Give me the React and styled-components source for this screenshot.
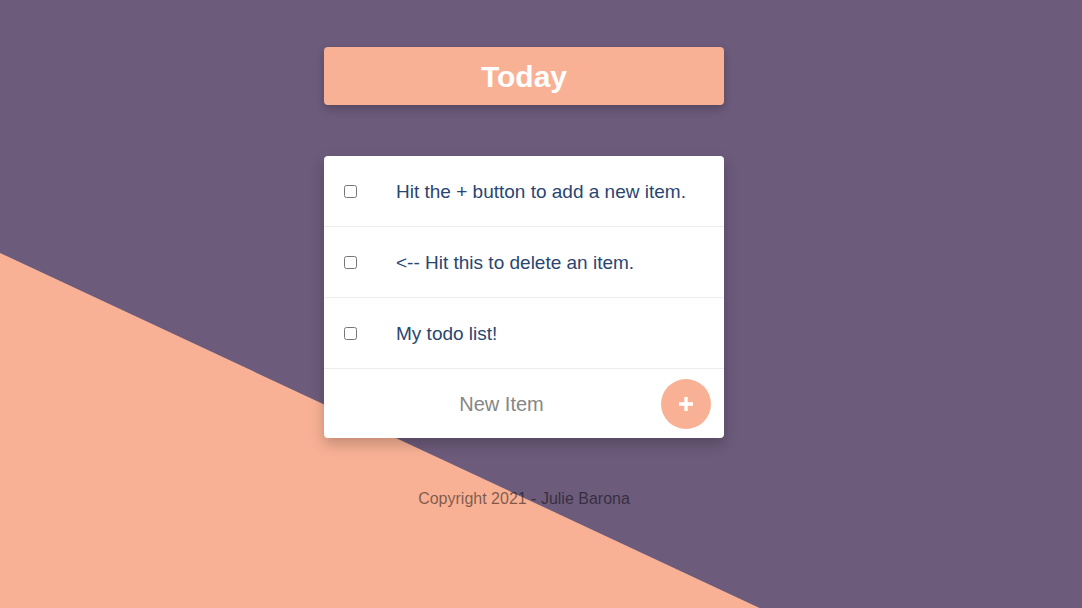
import styled, { createGlobalStyle } from "styled-components";
import { useState } from "react";

const COLORS = {
  purple: "#6c5b7b",
  peach: "#f8b195",
  navy: "#2a4670",
  line: "#ececec",
};

const GlobalStyle = createGlobalStyle`
  html, body {
    margin: 0;
    padding: 0;
  }

  body {
    font-family: "Helvetica Neue", "Liberation Sans", Arial, sans-serif;
    background: ${COLORS.purple};
  }
`;

const App = () => {
  const [items] = useState([
    { id: 1, text: "Hit the + button to add a new item." },
    { id: 2, text: "<-- Hit this to delete an item." },
    { id: 3, text: "My todo list!" },
  ]);

  return (
    <Page>
      <GlobalStyle />
      <Content>
        <Heading>
          <Title>Today</Title>
        </Heading>
        <Card>
          {items.map((item) => (
            <Row key={item.id}>
              <Check type="checkbox" />
              <ItemText>{item.text}</ItemText>
            </Row>
          ))}
          <NewRow>
            <NewInput placeholder="New Item" spellCheck={false} />
            <AddButton aria-label="add">
              <svg width="18" height="18" viewBox="0 0 18 18">
                <path d="M9 2v14M2 9h14" stroke="#fff" strokeWidth="3.4" />
              </svg>
            </AddButton>
          </NewRow>
        </Card>
        <Footer>Copyright 2021 - Julie Barona</Footer>
      </Content>
    </Page>
  );
};

const Page = styled.div`
  position: relative;
  min-height: 100vh;
  overflow: hidden;

  background: ${COLORS.purple};

  &::before {
    content: "";
    position: absolute;
    inset: 0;
    background: ${COLORS.peach};
    clip-path: polygon(0 41.6%, 70.2% 100%, 0 100%);
  }
`;

const Content = styled.main`
  position: relative;

  display: flex;
  flex-direction: column;
  align-items: center;

  padding-top: 47px;
  padding-right: 34px;
`;

const Heading = styled.header`
  width: 400px;
  height: 58px;

  display: flex;
  align-items: center;
  justify-content: center;

  background: ${COLORS.peach};
  border-radius: 4px;
  box-shadow: 0 4px 10px rgba(0, 0, 0, 0.22);
`;

const Title = styled.h1`
  margin: 2px 0 0 0;

  font-size: 30px;
  font-weight: 700;
  color: #ffffff;
`;

const Card = styled.section`
  width: 400px;
  margin-top: 51px;

  background: #ffffff;
  border-radius: 4px;
  box-shadow: 0 6px 14px rgba(0, 0, 0, 0.22);
`;

const Row = styled.div`
  height: 70px;

  display: flex;
  flex-direction: row;
  align-items: center;

  padding-left: 20px;
  border-bottom: 1px solid ${COLORS.line};
`;

const Check = styled.input`
  width: 13px;
  height: 13px;
  margin: 0 39px 0 0;
`;

const ItemText = styled.p`
  margin: 2px 0 0 0;

  font-size: 19px;
  font-weight: 300;
  color: ${COLORS.navy};
`;

const NewRow = styled.div`
  height: 69px;

  display: flex;
  flex-direction: row;
  align-items: center;

  padding-right: 13px;
`;

const NewInput = styled.input`
  flex: 1;
  min-width: 0;

  padding: 2px 0 0 18px;
  background: none;
  border: none;
  outline: none;

  font-family: inherit;
  font-size: 20px;
  text-align: center;
  color: #555;

  &::placeholder {
    color: #868686;
  }
`;

const AddButton = styled.button`
  width: 50px;
  height: 50px;

  display: flex;
  align-items: center;
  justify-content: center;

  padding: 0;
  border: none;
  border-radius: 50%;
  background: ${COLORS.peach};
  cursor: pointer;
`;

const Footer = styled.footer`
  margin-top: 52px;

  font-size: 16px;
  color: rgba(0, 0, 0, 0.5);
`;

export default App;
